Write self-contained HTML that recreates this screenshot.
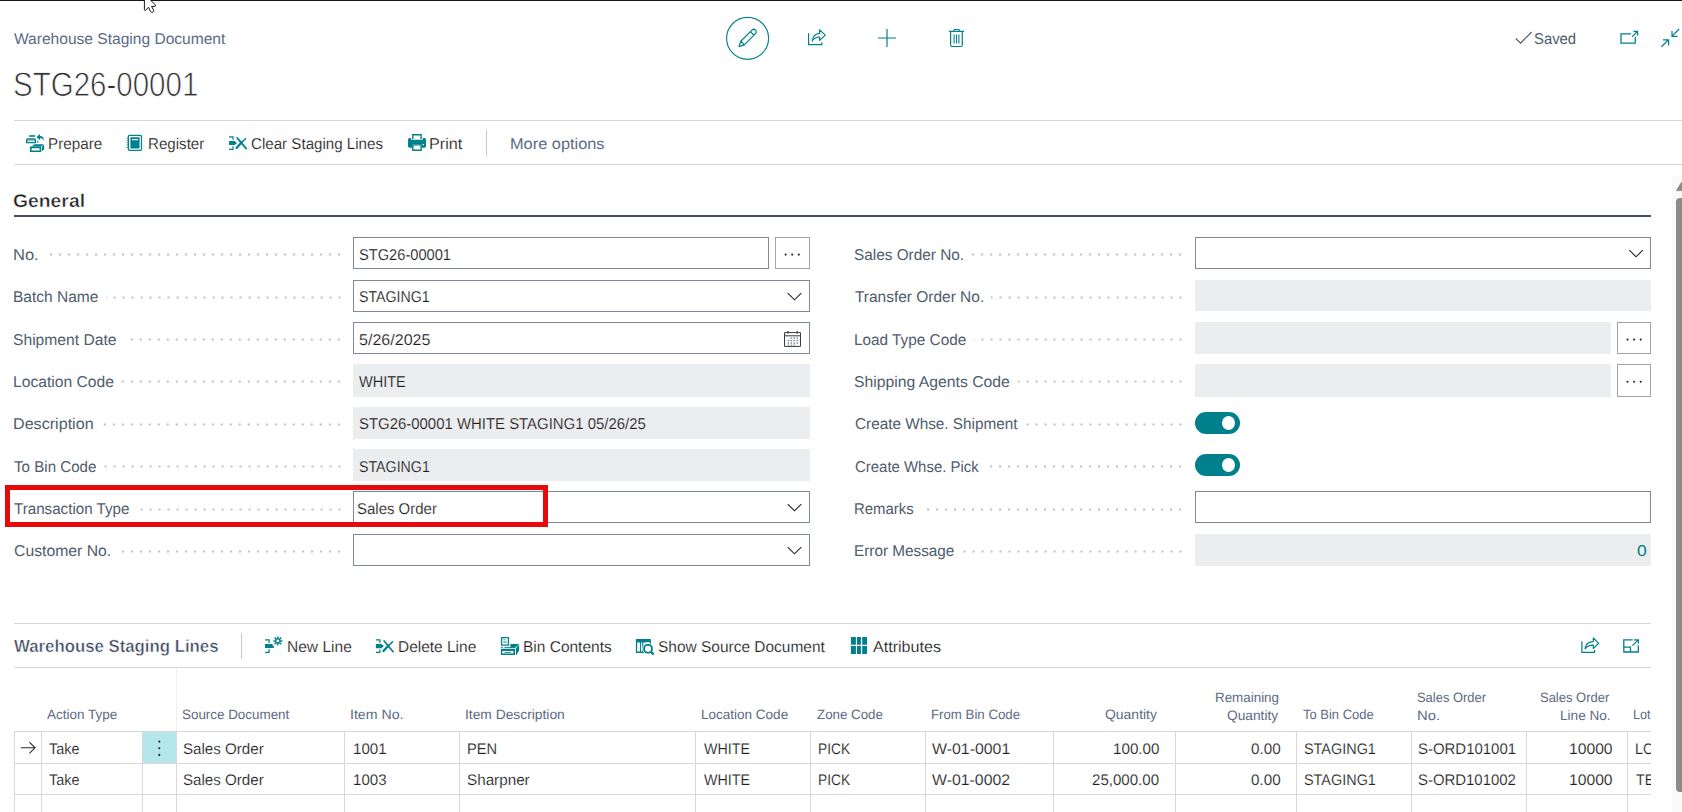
<!DOCTYPE html>
<html lang="en"><head><meta charset="utf-8"><title>Warehouse Staging Document</title>
<style>
html,body{margin:0;padding:0;background:#fff;}
body{width:1682px;height:812px;overflow:hidden;font-family:"Liberation Sans",sans-serif;}
#page{position:relative;width:1682px;height:812px;overflow:hidden;background:#fff;}
#page div,#page span,#page svg{position:absolute;}
.t{white-space:pre;line-height:1;font-family:"Liberation Sans",sans-serif;transform-origin:0 0;text-rendering:geometricPrecision;}
.hl{height:1px;background:#d5d7de;}
.fld{box-sizing:border-box;height:32px;border:1px solid #7f8998;background:#fff;}
.ro{height:32px;background:#ecedef;}
.btn{box-sizing:border-box;width:35px;height:32px;border:1px solid #a3a3a3;background:#fff;}
.dots{height:3px;background-image:radial-gradient(circle at 1px 1.5px,#bfc3cd 0.7px,rgba(191,195,205,0.45) 1.2px,rgba(191,195,205,0) 1.7px);background-size:9px 3px;background-repeat:repeat-x;}
.tog{width:45px;height:22px;border-radius:11px;background:#00808a;}
.tog i{position:absolute;left:27px;top:4px;width:13.2px;height:14px;border-radius:50%;background:#fff;}
.vl{width:1px;background:#d6d8de;}
.gl{height:1px;background:#d6d8de;}

</style></head>
<body>
<div id="page">
<!-- top window edge -->
<div style="left:0;top:0;width:1682px;height:1px;background:#141414"></div>

<!-- separators -->
<div class="hl" style="left:14px;top:120px;width:1668px"></div>
<div class="hl" style="left:14px;top:164px;width:1668px"></div>
<div style="left:486px;top:130px;width:1px;height:26px;background:#c5c8d0"></div>
<div style="left:14px;top:215px;width:1637px;height:2px;background:#454f66"></div>

<!-- left column fields -->
<div class="fld" style="left:353px;top:237px;width:416px"></div>
<div class="btn" style="left:775px;top:237px"></div>
<div class="fld" style="left:353px;top:280px;width:457px"></div>
<div class="fld" style="left:353px;top:322px;width:457px"></div>
<div class="ro"  style="left:353px;top:364.3px;width:457px;height:32.4px"></div>
<div class="ro"  style="left:353px;top:407px;width:457px"></div>
<div class="ro"  style="left:353px;top:449.3px;width:457px;height:31.6px"></div>
<div class="fld" style="left:353px;top:491px;width:457px"></div>
<div class="fld" style="left:353px;top:534px;width:457px"></div>

<!-- right column fields -->
<div class="fld" style="left:1195px;top:237px;width:456px"></div>
<div class="ro"  style="left:1195px;top:280px;width:456px;height:30.9px"></div>
<div class="ro"  style="left:1195px;top:322px;width:416px"></div>
<div class="btn" style="left:1617px;top:322px;width:34px"></div>
<div class="ro"  style="left:1195px;top:364.3px;width:416px;height:32.4px"></div>
<div class="btn" style="left:1617px;top:364px;width:34px;height:33px"></div>
<div class="tog" style="left:1195px;top:412px"><i></i></div>
<div class="tog" style="left:1195px;top:454px"><i></i></div>
<div class="fld" style="left:1195px;top:491px;width:456px"></div>
<div class="ro"  style="left:1195px;top:534px;width:456px"></div>

<!-- lines part -->
<div class="hl" style="left:14px;top:623px;width:1637px"></div>
<div class="hl" style="left:14px;top:667px;width:1637px"></div>
<div style="left:241px;top:633px;width:1px;height:26px;background:#c5c8d0"></div>

<!-- grid -->
<div style="left:143px;top:732px;width:33px;height:31px;background:#b3e7eb"></div>
<div class="gl" style="left:14px;top:731px;width:1637px"></div>
<div class="gl" style="left:14px;top:763px;width:1637px"></div>
<div class="gl" style="left:14px;top:794px;width:1637px"></div>
<div class="vl" style="left:176px;top:668px;height:63px;background:#eeeff2"></div>
<div class="vl" style="left:14px;top:731px;height:81px"></div>
<div class="vl" style="left:41px;top:731px;height:81px"></div>
<div class="vl" style="left:142px;top:731px;height:81px"></div>
<div class="vl" style="left:176px;top:731px;height:81px"></div>
<div class="vl" style="left:344px;top:731px;height:81px"></div>
<div class="vl" style="left:459px;top:731px;height:81px"></div>
<div class="vl" style="left:695px;top:731px;height:81px"></div>
<div class="vl" style="left:810px;top:731px;height:81px"></div>
<div class="vl" style="left:925px;top:731px;height:81px"></div>
<div class="vl" style="left:1053px;top:731px;height:81px"></div>
<div class="vl" style="left:1175px;top:731px;height:81px"></div>
<div class="vl" style="left:1296px;top:731px;height:81px"></div>
<div class="vl" style="left:1411px;top:731px;height:81px"></div>
<div class="vl" style="left:1526px;top:731px;height:81px"></div>
<div class="vl" style="left:1627px;top:731px;height:81px"></div>
<div class="dots" style="left:45.0px;top:253px;width:296.0px;background-position:5.0px 0"></div>
<div class="dots" style="left:105.5px;top:296px;width:235.5px;background-position:7.5px 0"></div>
<div class="dots" style="left:124.2px;top:338px;width:216.8px;background-position:6.8px 0"></div>
<div class="dots" style="left:121.2px;top:380px;width:219.8px;background-position:0.8px 0"></div>
<div class="dots" style="left:100.2px;top:423px;width:240.8px;background-position:3.8px 0"></div>
<div class="dots" style="left:103.5px;top:465px;width:237.5px;background-position:0.5px 0"></div>
<div class="dots" style="left:136.5px;top:508px;width:204.5px;background-position:3.5px 0"></div>
<div class="dots" style="left:117.0px;top:550px;width:224.0px;background-position:5.0px 0"></div>
<div class="dots" style="left:971.0px;top:253px;width:211.0px;background-position:1.0px 0"></div>
<div class="dots" style="left:990.5px;top:296px;width:191.5px;background-position:8.5px 0"></div>
<div class="dots" style="left:973.5px;top:338px;width:208.5px;background-position:7.5px 0"></div>
<div class="dots" style="left:1017.5px;top:380px;width:164.5px;background-position:8.5px 0"></div>
<div class="dots" style="left:1024.5px;top:423px;width:157.5px;background-position:1.5px 0"></div>
<div class="dots" style="left:986.0px;top:465px;width:196.0px;background-position:4.0px 0"></div>
<div class="dots" style="left:921.0px;top:508px;width:261.0px;background-position:6.0px 0"></div>
<div class="dots" style="left:961.5px;top:550px;width:220.5px;background-position:1.5px 0"></div>
<svg width="1682" height="812" viewBox="0 0 1682 812" style="left:0;top:0" fill="none" stroke-linecap="butt" stroke-linejoin="miter">
<!-- mouse cursor at window top -->
<path d="M144.4,-1 V9.6 Q144.5,10.8 145.6,10.4 L148.5,7.2 L150.6,11.6 Q151.6,12.9 153,12.2 Q154.2,11.4 153.6,10.2 L151.6,6.4 H155 Q156,6.2 155.5,5.2 L149.5,-1 Z" fill="#fff" stroke="#16161e" stroke-width="1" stroke-linejoin="round"/>

<g stroke="#00808a" stroke-width="1.2">
<!-- edit (pencil in circle) -->
<circle cx="747.6" cy="38.35" r="21" stroke-width="1.1"/>
<g transform="translate(739,46.6) rotate(-45)">
<path d="M0,0 L5,-2.5 H20.8 A2.5,2.5 0 0 1 20.8,2.5 H5 Z M5,-2.5 V2.5 M18.6,-2.5 V2.5" stroke-linejoin="round"/>
</g>
<!-- share -->
<path d="M808.6,33.2 V44.6 H821.8 V42.2"/>
<path d="M812.2,41 C812.8,36.6 815.6,33.6 819.6,33.4 V29.9 L825.3,35.1 L819.6,40.4 V37 C816.5,37 814.2,38 812.2,41 Z" stroke-linejoin="round"/>
<!-- plus -->
<path d="M878,38 H896 M887,29 V47"/>
<!-- trash -->
<path d="M948.9,31.4 H964 M954,31.2 V30.2 Q954,29.5 954.7,29.5 H958.6 Q959.3,29.5 959.3,30.2 V31.2 M950.6,31.6 V45 Q950.6,46.5 952.1,46.5 H960.8 Q962.3,46.5 962.3,45 V31.6"/>
<path d="M954.1,34.6 V43.6 M956.5,34.6 V43.6 M958.9,34.6 V43.6" stroke-width="1.1"/>
<!-- pop-out -->
<path d="M1631,33.9 H1621 V43.1 H1635.3 V36.8" stroke-width="1.3"/>
<path d="M1632,36.9 L1637.4,31.5 M1633.4,31.4 H1637.6 V35.6"/>
<!-- collapse -->
<path d="M1679.2,29 L1672,36.2 M1672,31 V36.3 H1677.6 M1661.3,46.7 L1668.6,39.8 M1663,39.8 H1668.6 V45.4"/>
<!-- subpage share -->
<path d="M1581.9,641.2 V652.3 H1594.5 V650.1"/>
<path d="M1585,648.8 C1585.6,644.5 1588.6,641.8 1593.3,641.6 V638 L1598.6,643.3 L1593.3,648.6 V645.2 C1590,645.2 1587.2,646.2 1585,648.8 Z" stroke-linejoin="round"/>
<!-- subpage expand -->
<path d="M1632.7,639.9 H1623.8 V652 H1638.3 V645.2 M1623.8,647.1 H1630.5 V652" stroke-width="1.3"/>
<path d="M1632.4,645.7 L1638.2,639.9 M1634,639.8 H1638.4 V643.7"/>
</g>
<!-- saved check -->
<path d="M1515.7,38.5 L1520.6,43.2 L1531.6,32" stroke="#505c6d" stroke-width="1.2"/>

<!-- action icons (filled teal) -->
<g fill="#00808a" stroke="none">
<!-- Prepare -->
<g>
<rect x="29.2" y="135.2" width="6" height="1.6"/>
<path d="M26.6,138.2 H35.4 L36,139.6 H26,Z"/>
<path d="M26,139.4 H36 V143.2 H26 Z M27.4,140.6 V142 H34.6 V140.6 Z" fill-rule="evenodd"/>
<path d="M36.6,137 L40,133.9 V136 C42.6,136 44,137.6 44,140.4 C43.2,138.8 42,138.2 40,138.2 V140.2 Z"/>
<rect x="37" y="141.2" width="1.4" height="1.4"/>
<path d="M34.4,144.2 H43.8 L41.2,146.4 H31.6 Z"/>
<path d="M30,146.6 H41.2 V152 H30 Z M31.6,148.2 V150.4 H39.6 V148.2 Z" fill-rule="evenodd"/>
<path d="M42,146.6 L44,144.8 V149.4 L42,151.6 Z"/>
</g>
<!-- Register -->
<path d="M129.4,134.8 H140.4 Q142.1,134.8 142.1,136.5 V149.3 Q142.1,151 140.4,151 H129.4 Q127.8,151 127.8,149.3 V136.5 Q127.8,134.8 129.4,134.8 Z M129.8,136 Q129,136 129,136.8 V149 Q129,149.8 129.8,149.8 H140.1 Q140.9,149.8 140.9,149 V136.8 Q140.9,136 140.1,136 Z" fill-rule="evenodd"/>
<path d="M130.4,137.2 H139.6 V148.6 H130.4 Z M132,139 V140.2 H138 V139 Z" fill-rule="evenodd"/>
<path d="M126.8,137.4 h1.6 v1 h-1.6z M126.8,139.8 h1.6 v1 h-1.6z M126.8,142.2 h1.6 v1 h-1.6z M126.8,144.6 h1.6 v1 h-1.6z M126.8,147 h1.6 v1 h-1.6z"/>
<!-- Clear staging lines / Delete line icon -->
<g>
<path d="M229,136.2 H233.6 V139.8 H232.4 V137.4 H229 Z"/>
<path d="M229,149.9 H233.6 V146.3 H232.4 V148.7 H229 Z"/>
<path d="M229,140.9 H234.6 L237,143 L234.6,145.1 H229 Z"/>
<path d="M237.2,137.9 L246.2,148.6" stroke="#00808a" stroke-width="1.7" stroke-linecap="round"/><path d="M245.6,138.8 L241.4,142.6" stroke="#00808a" stroke-width="1.5" stroke-linecap="round"/><path d="M241.4,142.6 L236.6,148" stroke="#00808a" stroke-width="2.3" stroke-linecap="round"/>
</g>
<g transform="translate(146.9,503.1)">
<path d="M229,136.2 H233.6 V139.8 H232.4 V137.4 H229 Z"/>
<path d="M229,149.9 H233.6 V146.3 H232.4 V148.7 H229 Z"/>
<path d="M229,140.9 H234.6 L237,143 L234.6,145.1 H229 Z"/>
<path d="M237.2,137.9 L246.2,148.6" stroke="#00808a" stroke-width="1.7" stroke-linecap="round"/><path d="M245.6,138.8 L241.4,142.6" stroke="#00808a" stroke-width="1.5" stroke-linecap="round"/><path d="M241.4,142.6 L236.6,148" stroke="#00808a" stroke-width="2.3" stroke-linecap="round"/>
</g>
<!-- Print -->
<path d="M412.1,134 H421.8 V139.2 H420.4 V135.4 H413.5 V139.2 H412.1 Z"/>
<path d="M409.6,138 H411 V139.8 H422.9 V138 H424.4 Q426,138.2 426,139.8 V146 Q426,147.6 424.4,147.7 H421.8 V144.8 H412.1 V147.7 H409.6 Q408,147.6 408,146 V139.8 Q408,138.2 409.6,138 Z M422.6,144.6 a0.8,0.8 0 1 0 1.6,0 a0.8,0.8 0 1 0 -1.6,0 Z" fill-rule="evenodd"/>
<path d="M412.1,144.8 H421.8 V151 H412.1 Z M413.5,145.4 V149.6 H420.4 V145.4 Z" fill-rule="evenodd"/>
<!-- New Line -->
<path d="M265.1,639.3 H269.7 V642.9 H268.5 V640.5 H265.1 Z"/>
<path d="M265.1,652.9 H269.7 V649.3 H268.5 V651.7 H265.1 Z"/>
<path d="M265,644 H272.6 V645.8 H273.8 V648 H265 Z"/>
<g transform="translate(277.9,640.9)" stroke="#00808a" stroke-width="1.5" fill="none">
<path d="M0,-4.5 V-1.9 M0,1.9 V4.5 M-4.5,0 H-1.9 M1.9,0 H4.5 M-3.3,-3.3 L-1.4,-1.4 M1.4,1.4 L3.3,3.3 M-3.3,3.3 L-1.4,1.4 M1.4,-1.4 L3.3,-3.3"/>
<circle r="2" stroke-width="1.1"/>
</g>
<!-- Bin contents -->
<path d="M500.9,637 H509.1 V645.7 H500.9 Z M502.2,638.2 V644.5 H507.8 V638.2 Z" fill-rule="evenodd"/>
<rect x="503.2" y="639.3" width="2.2" height="0.9" opacity=".8"/>
<rect x="503.2" y="640.8" width="3.6" height="0.9" opacity=".6"/>
<rect x="503.2" y="642.2" width="3.6" height="0.9" opacity=".6"/>
<path d="M510.4,644 H519.1 L515.6,647.4 H510.4 Z"/>
<path d="M501,647 H503 V647.9 H501 Z M504.4,647 H515 V647.9 H504.4 Z" opacity=".85"/>
<path d="M500.9,648.8 H515 V655 H500.9 Z M502.3,651 V653.6 H513.4 V651 Z M504.4,651.9 H511.2 V652.8 H504.4 Z" fill-rule="evenodd"/>
<path d="M516,648.2 L519.1,644.6 V650 L516.8,654.8 H516 Z"/>
<!-- Show source document -->
<path d="M635.9,639.1 H650.9 V652.9 H635.9 Z M637.2,642.6 V651.6 H639.9 V642.6 Z M641,642.6 V651.6 H642.2 V642.6 Z M643.4,642.6 V651.6 H649.6 V642.6 Z" fill-rule="evenodd"/>
<circle cx="648" cy="648.8" r="5.7" fill="#fff"/>
<path d="M651.2,652 L654.6,655.2 L653,656.6 L649.6,653.4 Z" fill="#fff"/>
<path d="M645.4,642.5 h4.2 v0.9 h-4.2z" fill="#fff"/>
<g stroke="#00808a" fill="none"><rect x="644.1" y="644.9" width="7.8" height="7.8" rx="3.3" stroke-width="1.8"/><path d="M651,651.9 L653.7,654.5" stroke-width="2.2"/></g>
<!-- Attributes -->
<path d="M850.9,637 h5 v7.7 h-5z M857,637 h3.9 v7.7 h-3.9z M862.2,637 h4.8 v7.7 h-4.8z M850.9,646.1 h5 v7.9 h-5z M857,646.1 h3.9 v7.9 h-3.9z M862.2,646.1 h4.8 v7.9 h-4.8z"/>
</g>

<!-- chevrons -->
<g stroke="#2b2b2b" stroke-width="1.15">
<path d="M787.7,293.2 L794.5,299.8 L801.3,293.2"/>
<path d="M787.7,504.2 L794.5,510.8 L801.3,504.2"/>
<path d="M787.7,547.2 L794.5,553.8 L801.3,547.2"/>
<path d="M1629.3,250.2 L1636.1,256.8 L1642.9,250.2"/>
</g>
<!-- calendar -->
<g stroke="#3a3a3a" stroke-width="1">
<path d="M784.5,332.6 H800.5 V346.4 H784.5 Z M784.5,335.8 H800.5" />
<path d="M788,331 V333.6 M797.2,331 V333.6" stroke-width="1.2"/>
</g>
<g fill="#7a8190">
<rect x="790.5" y="337.4" width="1.6" height="1.3"/><rect x="793.5" y="337.4" width="1.6" height="1.3"/><rect x="796.5" y="337.4" width="1.6" height="1.3"/>
<rect x="787.5" y="339.9" width="1.6" height="1.3"/><rect x="790.5" y="339.9" width="1.6" height="1.3"/><rect x="793.5" y="339.9" width="1.6" height="1.3"/><rect x="796.5" y="339.9" width="1.6" height="1.3"/>
<rect x="787.5" y="342.4" width="1.6" height="1.3"/><rect x="790.5" y="342.4" width="1.6" height="1.3"/><rect x="793.5" y="342.4" width="1.6" height="1.3"/><rect x="796.5" y="342.4" width="1.6" height="1.3"/>
<rect x="787.5" y="344.6" width="1.6" height="1"/><rect x="790.5" y="344.6" width="1.6" height="1"/><rect x="793.5" y="344.6" width="1.6" height="1"/>
</g>
<!-- lookup ellipsis dots -->
<g fill="#262626">
<circle cx="785.6" cy="254.6" r="1.05"/><circle cx="792.2" cy="254.6" r="1.05"/><circle cx="798.8" cy="254.6" r="1.05"/>
<circle cx="1627.5" cy="339.6" r="1.05"/><circle cx="1634.1" cy="339.6" r="1.05"/><circle cx="1640.7" cy="339.6" r="1.05"/>
<circle cx="1627.5" cy="381.8" r="1.05"/><circle cx="1634.1" cy="381.8" r="1.05"/><circle cx="1640.7" cy="381.8" r="1.05"/>
<!-- row menu -->
<circle cx="159.3" cy="741.6" r="1.05"/><circle cx="159.3" cy="748.2" r="1.05"/><circle cx="159.3" cy="754.9" r="1.05"/>
</g>
<!-- row arrow -->
<path d="M20.8,747.8 H34.6 M29.4,742.2 L35,747.8 L29.4,753.4" stroke="#2b2b2b" stroke-width="1.1"/>
</svg>

<!-- text -->
<span class="t" style="left:14.00px;top:32px;font-size:15.6px;color:#5c6b84;transform:scaleX(0.9977);">Warehouse Staging Document</span>
<span class="t" style="left:13.17px;top:68px;font-size:34px;color:#303030;transform:scaleX(0.8675);-webkit-text-stroke:0.8px #fff;">STG26-00001</span>
<span class="t" style="left:1534.33px;top:32px;font-size:15.6px;color:#505c6d;transform:scaleX(0.9523);">Saved</span>
<span class="t" style="left:47.78px;top:137px;font-size:15.6px;color:#212121;transform:scaleX(0.9774);-webkit-text-stroke:0.16px #fff;">Prepare</span>
<span class="t" style="left:148.19px;top:137px;font-size:15.6px;color:#212121;transform:scaleX(0.9696);-webkit-text-stroke:0.16px #fff;">Register</span>
<span class="t" style="left:251.04px;top:137px;font-size:15.6px;color:#212121;transform:scaleX(0.9699);-webkit-text-stroke:0.16px #fff;">Clear Staging Lines</span>
<span class="t" style="left:429.40px;top:137px;font-size:15.6px;color:#212121;transform:scaleX(1.0387);-webkit-text-stroke:0.16px #fff;">Print</span>
<span class="t" style="left:510.07px;top:137px;font-size:15.6px;color:#5c6b84;transform:scaleX(1.0484);">More options</span>
<span class="t" style="left:13.03px;top:192px;font-size:18.6px;color:#212121;transform:scaleX(1.0400);font-weight:700;-webkit-text-stroke:0.45px #fff;">General</span>
<span class="t" style="left:13.26px;top:248px;font-size:15.6px;color:#505c6d;transform:scaleX(1.0596);">No.</span>
<span class="t" style="left:13.26px;top:290px;font-size:15.6px;color:#505c6d;transform:scaleX(0.9948);">Batch Name</span>
<span class="t" style="left:13.26px;top:333px;font-size:15.6px;color:#505c6d;transform:scaleX(1.0036);">Shipment Date</span>
<span class="t" style="left:13.33px;top:375px;font-size:15.6px;color:#505c6d;transform:scaleX(1.0042);">Location Code</span>
<span class="t" style="left:13.21px;top:417px;font-size:15.6px;color:#505c6d;transform:scaleX(1.0336);">Description</span>
<span class="t" style="left:14.20px;top:460px;font-size:15.6px;color:#505c6d;transform:scaleX(0.9700);">To Bin Code</span>
<span class="t" style="left:14.20px;top:502px;font-size:15.6px;color:#505c6d;transform:scaleX(0.9719);">Transaction Type</span>
<span class="t" style="left:13.71px;top:544px;font-size:15.6px;color:#505c6d;transform:scaleX(1.0104);">Customer No.</span>
<span class="t" style="left:854.30px;top:248px;font-size:15.6px;color:#505c6d;transform:scaleX(0.9844);">Sales Order No.</span>
<span class="t" style="left:855.19px;top:290px;font-size:15.6px;color:#505c6d;transform:scaleX(0.9917);">Transfer Order No.</span>
<span class="t" style="left:854.35px;top:333px;font-size:15.6px;color:#505c6d;transform:scaleX(0.9833);">Load Type Code</span>
<span class="t" style="left:854.25px;top:375px;font-size:15.6px;color:#505c6d;transform:scaleX(1.0098);">Shipping Agents Code</span>
<span class="t" style="left:854.73px;top:417px;font-size:15.6px;color:#505c6d;transform:scaleX(0.9820);">Create Whse. Shipment</span>
<span class="t" style="left:854.75px;top:460px;font-size:15.6px;color:#505c6d;transform:scaleX(0.9584);">Create Whse. Pick</span>
<span class="t" style="left:854.31px;top:502px;font-size:15.6px;color:#505c6d;transform:scaleX(0.9559);">Remarks</span>
<span class="t" style="left:854.28px;top:544px;font-size:15.6px;color:#505c6d;transform:scaleX(0.9811);">Error Message</span>
<span class="t" style="left:358.84px;top:248px;font-size:15.6px;color:#212121;transform:scaleX(0.9390);-webkit-text-stroke:0.16px #fff;">STG26-00001</span>
<span class="t" style="left:358.86px;top:290px;font-size:15.6px;color:#212121;transform:scaleX(0.9092);-webkit-text-stroke:0.16px #fff;">STAGING1</span>
<span class="t" style="left:358.86px;top:333px;font-size:15.6px;color:#212121;transform:scaleX(1.0304);-webkit-text-stroke:0.16px #fff;">5/26/2025</span>
<span class="t" style="left:359.00px;top:375px;font-size:15.6px;color:#212121;transform:scaleX(0.9310);-webkit-text-stroke:0.16px #ecedef;">WHITE</span>
<span class="t" style="left:358.83px;top:417px;font-size:15.6px;color:#212121;transform:scaleX(0.9572);-webkit-text-stroke:0.16px #ecedef;">STG26-00001 WHITE STAGING1 05/26/25</span>
<span class="t" style="left:358.86px;top:460px;font-size:15.6px;color:#212121;transform:scaleX(0.9118);-webkit-text-stroke:0.16px #ecedef;">STAGING1</span>
<span class="t" style="left:357.13px;top:502px;font-size:15.6px;color:#212121;transform:scaleX(0.9600);-webkit-text-stroke:0.16px #fff;">Sales Order</span>
<span class="t" style="left:1637.10px;top:544px;font-size:15.6px;color:#00808a;transform:scaleX(1.1157);">0</span>
<span class="t" style="left:14.00px;top:638px;font-size:17.6px;color:#3c4962;transform:scaleX(0.9537);font-weight:700;-webkit-text-stroke:0.45px #fff;">Warehouse Staging Lines</span>
<span class="t" style="left:287.13px;top:640px;font-size:15.6px;color:#212121;transform:scaleX(0.9965);-webkit-text-stroke:0.16px #fff;">New Line</span>
<span class="t" style="left:398.06px;top:640px;font-size:15.6px;color:#212121;transform:scaleX(0.9920);-webkit-text-stroke:0.16px #fff;">Delete Line</span>
<span class="t" style="left:522.96px;top:640px;font-size:15.6px;color:#212121;transform:scaleX(0.9934);-webkit-text-stroke:0.16px #fff;">Bin Contents</span>
<span class="t" style="left:657.67px;top:640px;font-size:15.6px;color:#212121;transform:scaleX(0.9920);-webkit-text-stroke:0.16px #fff;">Show Source Document</span>
<span class="t" style="left:872.80px;top:640px;font-size:15.6px;color:#212121;transform:scaleX(1.0320);-webkit-text-stroke:0.16px #fff;">Attributes</span>
<span class="t" style="left:47.40px;top:708px;font-size:13.6px;color:#5c6b84;transform:scaleX(0.9907);">Action Type</span>
<span class="t" style="left:182.00px;top:708px;font-size:13.6px;color:#5c6b84;transform:scaleX(0.9858);">Source Document</span>
<span class="t" style="left:350.12px;top:708px;font-size:13.6px;color:#5c6b84;transform:scaleX(1.0424);">Item No.</span>
<span class="t" style="left:465.16px;top:708px;font-size:13.6px;color:#5c6b84;transform:scaleX(1.0162);">Item Description</span>
<span class="t" style="left:701.39px;top:708px;font-size:13.6px;color:#5c6b84;transform:scaleX(0.9941);">Location Code</span>
<span class="t" style="left:817.00px;top:708px;font-size:13.6px;color:#5c6b84;transform:scaleX(0.9802);">Zone Code</span>
<span class="t" style="left:930.94px;top:708px;font-size:13.6px;color:#5c6b84;transform:scaleX(0.9745);">From Bin Code</span>
<span class="t" style="left:1105.04px;top:708px;font-size:13.6px;color:#5c6b84;transform:scaleX(1.0263);">Quantity</span>
<span class="t" style="left:1214.93px;top:691px;font-size:13.6px;color:#5c6b84;transform:scaleX(0.9850);">Remaining</span>
<span class="t" style="left:1226.85px;top:709px;font-size:13.6px;color:#5c6b84;transform:scaleX(1.0104);">Quantity</span>
<span class="t" style="left:1303.34px;top:708px;font-size:13.6px;color:#5c6b84;transform:scaleX(0.9543);">To Bin Code</span>
<span class="t" style="left:1417.42px;top:691px;font-size:13.6px;color:#5c6b84;transform:scaleX(0.9511);">Sales Order</span>
<span class="t" style="left:1416.89px;top:709px;font-size:13.6px;color:#5c6b84;transform:scaleX(1.0892);">No.</span>
<span class="t" style="left:1540.42px;top:691px;font-size:13.6px;color:#5c6b84;transform:scaleX(0.9543);">Sales Order</span>
<span class="t" style="left:1559.58px;top:709px;font-size:13.6px;color:#5c6b84;transform:scaleX(1.0001);">Line No.</span>
<span class="t" style="left:1633.45px;top:708px;font-size:13.6px;color:#5c6b84;transform:scaleX(0.9300);width:18.87px;overflow:hidden;">Lot No.</span>
<span class="t" style="left:48.71px;top:742px;font-size:15.3px;color:#212121;transform:scaleX(0.9428);-webkit-text-stroke:0.16px #fff;">Take</span>
<span class="t" style="left:182.92px;top:742px;font-size:15.3px;color:#212121;transform:scaleX(0.9884);-webkit-text-stroke:0.16px #fff;">Sales Order</span>
<span class="t" style="left:352.65px;top:742px;font-size:15.3px;color:#212121;transform:scaleX(0.9894);-webkit-text-stroke:0.16px #fff;">1001</span>
<span class="t" style="left:466.94px;top:742px;font-size:15.3px;color:#212121;transform:scaleX(0.9559);-webkit-text-stroke:0.16px #fff;">PEN</span>
<span class="t" style="left:704.00px;top:742px;font-size:15.3px;color:#212121;transform:scaleX(0.9325);-webkit-text-stroke:0.16px #fff;">WHITE</span>
<span class="t" style="left:817.90px;top:742px;font-size:15.3px;color:#212121;transform:scaleX(0.8991);-webkit-text-stroke:0.16px #fff;">PICK</span>
<span class="t" style="left:931.75px;top:742px;font-size:15.3px;color:#212121;transform:scaleX(1.0383);-webkit-text-stroke:0.16px #fff;">W-01-0001</span>
<span class="t" style="left:1113.43px;top:742px;font-size:15.3px;color:#212121;transform:scaleX(0.9936);-webkit-text-stroke:0.16px #fff;">100.00</span>
<span class="t" style="left:1251.39px;top:742px;font-size:15.3px;color:#212121;transform:scaleX(0.9945);-webkit-text-stroke:0.16px #fff;">0.00</span>
<span class="t" style="left:1303.85px;top:742px;font-size:15.3px;color:#212121;transform:scaleX(0.9430);-webkit-text-stroke:0.16px #fff;">STAGING1</span>
<span class="t" style="left:1418.33px;top:742px;font-size:15.3px;color:#212121;transform:scaleX(0.9768);-webkit-text-stroke:0.16px #fff;">S-ORD101001</span>
<span class="t" style="left:1569.34px;top:742px;font-size:15.3px;color:#212121;transform:scaleX(1.0246);-webkit-text-stroke:0.16px #fff;">10000</span>
<span class="t" style="left:48.71px;top:773px;font-size:15.3px;color:#212121;transform:scaleX(0.9428);-webkit-text-stroke:0.16px #fff;">Take</span>
<span class="t" style="left:182.92px;top:773px;font-size:15.3px;color:#212121;transform:scaleX(0.9884);-webkit-text-stroke:0.16px #fff;">Sales Order</span>
<span class="t" style="left:352.66px;top:773px;font-size:15.3px;color:#212121;transform:scaleX(0.9847);-webkit-text-stroke:0.16px #fff;">1003</span>
<span class="t" style="left:466.91px;top:773px;font-size:15.3px;color:#212121;transform:scaleX(0.9960);-webkit-text-stroke:0.16px #fff;">Sharpner</span>
<span class="t" style="left:704.00px;top:773px;font-size:15.3px;color:#212121;transform:scaleX(0.9325);-webkit-text-stroke:0.16px #fff;">WHITE</span>
<span class="t" style="left:817.90px;top:773px;font-size:15.3px;color:#212121;transform:scaleX(0.8991);-webkit-text-stroke:0.16px #fff;">PICK</span>
<span class="t" style="left:931.75px;top:773px;font-size:15.3px;color:#212121;transform:scaleX(1.0362);-webkit-text-stroke:0.16px #fff;">W-01-0002</span>
<span class="t" style="left:1091.55px;top:773px;font-size:15.3px;color:#212121;transform:scaleX(0.9852);-webkit-text-stroke:0.16px #fff;">25,000.00</span>
<span class="t" style="left:1251.39px;top:773px;font-size:15.3px;color:#212121;transform:scaleX(0.9945);-webkit-text-stroke:0.16px #fff;">0.00</span>
<span class="t" style="left:1303.85px;top:773px;font-size:15.3px;color:#212121;transform:scaleX(0.9430);-webkit-text-stroke:0.16px #fff;">STAGING1</span>
<span class="t" style="left:1418.33px;top:773px;font-size:15.3px;color:#212121;transform:scaleX(0.9753);-webkit-text-stroke:0.16px #fff;">S-ORD101002</span>
<span class="t" style="left:1569.34px;top:773px;font-size:15.3px;color:#212121;transform:scaleX(1.0246);-webkit-text-stroke:0.16px #fff;">10000</span>
<span class="t" style="left:1634.93px;top:742px;font-size:15.3px;color:#212121;transform:scaleX(0.9300);width:17.28px;overflow:hidden;-webkit-text-stroke:0.16px #fff;">LC0001</span>
<span class="t" style="left:1635.72px;top:773px;font-size:15.3px;color:#212121;transform:scaleX(0.9300);width:16.44px;overflow:hidden;-webkit-text-stroke:0.16px #fff;">TE0001</span>
<!-- highlight rectangle -->
<div style="left:5px;top:485px;width:543px;height:42px;box-sizing:border-box;border:5px solid #e60a0a"></div>
<!-- right clip + scrollbar -->
<div style="left:1651px;top:668px;width:21px;height:144px;background:#fff"></div>
<div style="left:1672px;top:176px;width:10px;height:636px;background:#fafafa"></div>
<div style="left:1676px;top:198px;width:8px;height:594px;background:#8b8b8b;border-radius:4px 0 0 4px"></div>
<svg width="10" height="10" style="left:1672px;top:182px" viewBox="0 0 10 10"><path d="M4.4,8.6 L9.2,0.8 Q9.6,0.2 10,0.2 V8.6 Z" fill="#8b8b8b" stroke="#8b8b8b" stroke-width="0.8" stroke-linejoin="round"/></svg>

</div>
</body></html>
